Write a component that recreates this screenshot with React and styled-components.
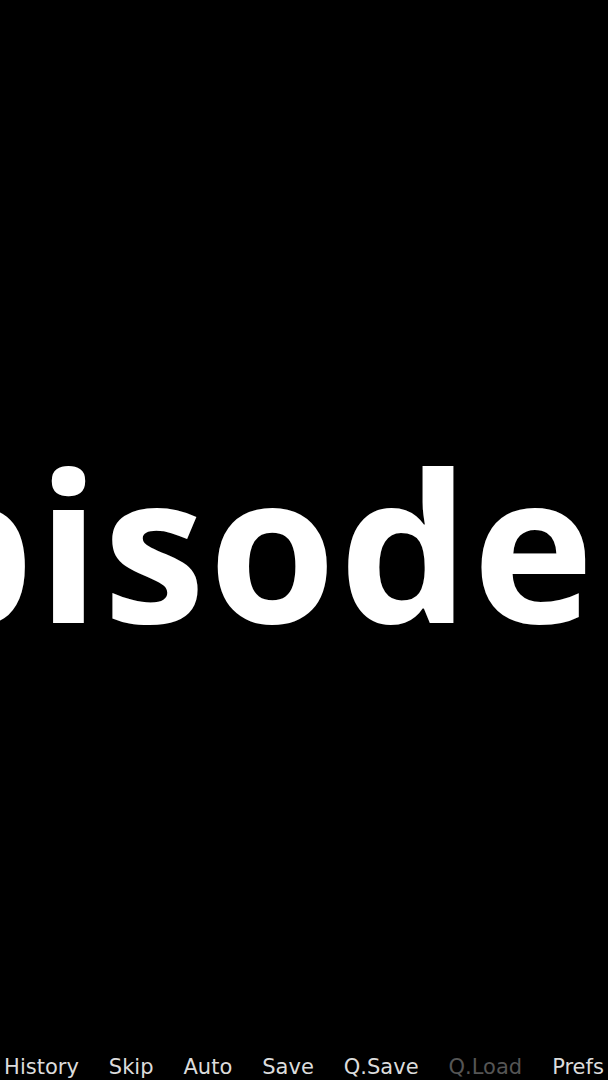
import React from "react";
import styled, { createGlobalStyle } from "styled-components";

const GlobalStyle = createGlobalStyle`
	html, body {
		margin: 0;
		padding: 0;
		background: #000;
	}
	#root {
		width: 608px;
		height: 1080px;
	}
`;

const Screen = styled.div`
	display: flex;
	flex-direction: column;
	width: 608px;
	height: 1080px;
	background: #000;
	overflow: hidden;
`;

const Stage = styled.div`
	display: flex;
	justify-content: flex-end;
	padding: 403px ${(props) => props.right}px 0 0;
	overflow: hidden;
`;

const Title = styled.div`
	font-family: "Open Sans", "Noto Sans", sans-serif;
	font-weight: 700;
	font-size: 206px;
	letter-spacing: 3px;
	line-height: normal;
	color: #fff;
	white-space: nowrap;
	flex-shrink: 0;
`;

const QuickMenu = styled.ul`
	display: flex;
	justify-content: center;
	gap: 30px;
	margin: auto 0 0 0;
	padding: 0;
	list-style: none;
`;

const QuickButton = styled.li`
	font-family: "DejaVu Sans", sans-serif;
	font-size: 21px;
	line-height: 25px;
	color: ${(props) => (props.disabled ? "#555555" : "#dcdcdc")};
	white-space: nowrap;
`;

const items = [
	{ label: "History" },
	{ label: "Skip" },
	{ label: "Auto" },
	{ label: "Save" },
	{ label: "Q.Save" },
	{ label: "Q.Load", disabled: true },
	{ label: "Prefs" },
];

const App = () => {
	return (
		<>
			<GlobalStyle />
			<Screen>
				<Stage right={11}>
					<Title>Episode</Title>
				</Stage>
				<QuickMenu>
					{items.map((item) => (
						<QuickButton key={item.label} disabled={item.disabled}>
							{item.label}
						</QuickButton>
					))}
				</QuickMenu>
			</Screen>
		</>
	);
};

export default App;
